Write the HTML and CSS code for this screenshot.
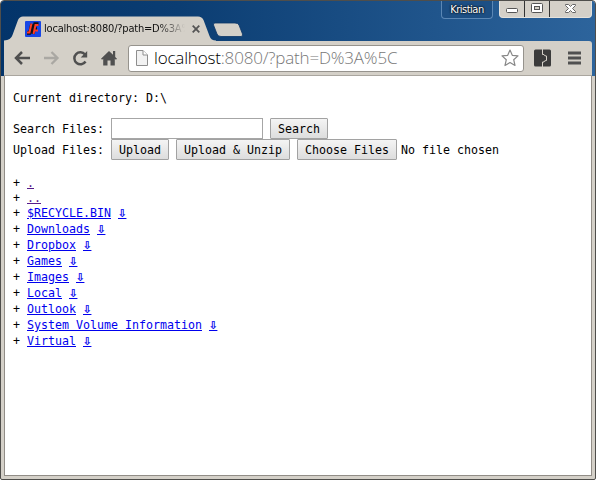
FILE: index.html
```
<!DOCTYPE html>
<html lang="en">
<head>
<meta charset="utf-8">
<title>localhost:8080/?path=D%3A%5C</title>
<link rel="stylesheet" href="styles.css">
</head>
<body>
<div class="window">
  <header class="chrome">
    <div class="titlebar">
      <div class="tab">
        <svg class="tab-shape" width="213" height="25" viewBox="0 0 213 25"><path d="M0 25V24.500Q7 24 8.500 19L14 4Q15.500 .5 19 .5H194Q198 .5 199.500 4L205.500 20Q207 24.500 212 24.500V25Z" fill="#d4d0c8"/></svg>
        <svg class="favicon" width="16" height="16" viewBox="0 0 16 16"><rect width="16" height="16" rx="1" fill="#1746e6"/><path d="M7 3L5.500 9L4.500 12H2M13.500 3H10L8 13M9 8H12" fill="none" stroke="#101018" stroke-width="3.500"/><path d="M6.500 2.500L5 9L4.500 11.500H2M13.500 4H10.500L8.500 13M9 9.500H13" fill="none" stroke="#ff3c24" stroke-width="2"/></svg>
        <span class="tab-title">localhost:8080/?path=D%3A%5C</span>
        <svg class="tab-close" width="8" height="8" viewBox="0 0 8 8"><path d="M.7 .7L7.300 7.300M7.300 .7L.7 7.300" stroke="#555" stroke-width="1.800"/></svg>
      </div>
      <svg class="new-tab" width="32" height="16" viewBox="0 0 32 16"><path d="M3 1H23Q26 1 27 3L30.500 12Q31 14.500 29 14.500H9Q6 14.500 5 12L1.500 3Q1 1 3 1Z" fill="#d4d0c8" stroke="#0a3566" stroke-width=".8"/></svg>
      <span class="user">Kristian</span>
      <div class="controls">
        <span class="control"><svg width="24" height="16" viewBox="0 0 24 16"><rect x="6.500" y="7.500" width="11" height="4" rx="1" fill="#fff" stroke="#555"/></svg></span>
        <span class="control"><svg width="24" height="16" viewBox="0 0 24 16"><rect x="6.500" y="2.500" width="11" height="9" rx="1" fill="#fff" stroke="#555"/><rect x="9.500" y="5.500" width="5" height="3" fill="#d4d0c8" stroke="#555"/></svg></span>
        <span class="control close"><svg width="41" height="16" viewBox="0 0 41 16"><path d="M15.500 3.500H18.500L20.500 5.500L22.500 3.500H25.500V4.500L22.500 7.500L25.500 10.500V11.500H22.500L20.500 9.500L18.500 11.500H15.500V10.500L18.500 7.500L15.500 4.500Z" fill="#fff" stroke="#666"/></svg></span>
      </div>
    </div>
    <div class="toolbar">
      <svg class="nav" width="18" height="16" viewBox="0 0 18 16"><path d="M16 8H2.500M8 2L2 8L8 14" fill="none" stroke="#505050" stroke-width="2.500"/></svg>
      <svg class="nav" width="18" height="16" viewBox="0 0 18 16"><path d="M1 8H14M8.500 2L14.500 8L8.500 14" fill="none" stroke="#aaa8a3" stroke-width="2.300"/></svg>
      <svg class="nav" width="18" height="16" viewBox="0 0 18 16"><path d="M13.500 11.500A6 6 0 1 1 13 4.500" fill="none" stroke="#505050" stroke-width="2.500"/><path d="M15.200 1V7.500H8.700Z" fill="#505050"/></svg>
      <svg class="nav" width="18" height="16" viewBox="0 0 18 16"><path d="M8 1L12 4.800V1H14.200V7L16 8.700L14.900 9.700L13.800 8.800V15.500H9.500V10.500H6.500V15.500H2.200V8.800L1.100 9.700L0 8.700Z" fill="#505050"/></svg>
      <div class="address">
        <svg class="page-icon" width="12" height="16" viewBox="0 0 12 16"><path d="M.5 .5H7L11.500 5V15.500H.5Z" fill="#f2f2f2" stroke="#8e8e8e"/><path d="M7 .5V5H11.500" fill="#fff" stroke="#8e8e8e"/></svg>
        <span class="url"><span class="host">localhost</span>:8080/?path=D%3A%5C</span>
        <svg class="star" width="18" height="18" viewBox="0 0 18 18"><path d="M9 1L11.300 6.300L17 6.900L12.700 10.700L14 16.500L9 13.500L4 16.500L5.300 10.700L1 6.900L6.700 6.300Z" fill="#fff" stroke="#888" stroke-width="1.200" stroke-linejoin="round"/></svg>
      </div>
      <svg class="extension" width="17" height="18" viewBox="0 0 17 18"><rect y=".5" width="17" height="17" rx="1.500" fill="#3b3b3b"/><path d="M8.500 0V5.500H10Q10 7 12.500 7V11.500Q10 11.500 10 13H8.500V18" fill="none" stroke="#d4d0c8" stroke-width="1"/></svg>
      <svg class="menu" width="13" height="14" viewBox="0 0 13 14"><path d="M0 2H13M0 7H13M0 12H13" stroke="#505050" stroke-width="3"/></svg>
    </div>
  </header>
  <main class="page">
    <p class="current">Current directory: D:\</p>
    <form class="search"><label>Search Files:</label><input class="query" type="text" aria-label="Search Files"><button class="button" type="button">Search</button></form>
    <form class="upload"><label>Upload Files:</label><button class="button" type="button">Upload</button><button class="button" type="button">Upload &amp; Unzip</button><button class="button" type="button">Choose Files</button><span class="chosen">No file chosen</span></form>
    <div class="listing">
      <div class="entry short">+ <a class="visited" href="#">.</a></div>
      <div class="entry short">+ <a class="visited" href="#">..</a></div>
      <div class="entry">+ <a href="#">$RECYCLE.BIN</a> <a class="down" href="#">⇩</a></div>
      <div class="entry">+ <a href="#">Downloads</a> <a class="down" href="#">⇩</a></div>
      <div class="entry">+ <a href="#">Dropbox</a> <a class="down" href="#">⇩</a></div>
      <div class="entry">+ <a href="#">Games</a> <a class="down" href="#">⇩</a></div>
      <div class="entry">+ <a href="#">Images</a> <a class="down" href="#">⇩</a></div>
      <div class="entry">+ <a href="#">Local</a> <a class="down" href="#">⇩</a></div>
      <div class="entry">+ <a href="#">Outlook</a> <a class="down" href="#">⇩</a></div>
      <div class="entry">+ <a href="#">System Volume Information</a> <a class="down" href="#">⇩</a></div>
      <div class="entry">+ <a href="#">Virtual</a> <a class="down" href="#">⇩</a></div>
    </div>
  </main>
</div>
</body>
</html>
```
FILE: styles.css
```
* { box-sizing: border-box; }
body { margin: 0; background: #fff; }
svg { display: block; flex: none; }
.window {
  width: 596px;
  height: 480px;
  display: flex;
  flex-direction: column;
  border: 1px solid #4f4e4b;
  border-radius: 4px 4px 2px 2px;
  overflow: hidden;
  background: #d4d0c8;
}
.chrome {
  height: 75px;
  flex: none;
  padding: 0 3px;
  background: linear-gradient(90deg, #03346a, #0b3d72 30%, #2d649c);
}
.titlebar { height: 40px; display: flex; align-items: flex-start; }
.tab {
  position: relative;
  width: 213px;
  height: 25px;
  margin-top: 15px;
  padding: 5px 0 0 21px;
  display: flex;
  flex: none;
}
.tab-shape { position: absolute; left: 0; top: 0; }
.favicon, .tab-title, .tab-close { position: relative; }
.tab-title {
  width: 141px;
  margin-left: 3px;
  overflow: hidden;
  white-space: nowrap;
  font: 11px/15px "DejaVu Sans Condensed", "DejaVu Sans", sans-serif;
  font-stretch: condensed;
  letter-spacing: -0.2px;
  color: #111;
  -webkit-mask-image: linear-gradient(90deg, #000 115px, transparent 141px);
  mask-image: linear-gradient(90deg, #000 115px, transparent 141px);
}
.tab-close { margin: 4px 0 0 7px; }
.new-tab { margin: 21px 0 0 -5px; }
.user {
  width: 52px;
  height: 18px;
  margin-left: auto;
  border: 1px solid #5b87b5;
  border-top: 0;
  border-radius: 0 0 4px 4px;
  background: #1d4f84;
  color: #fff;
  text-align: center;
  font: 11px/17px "DejaVu Sans Condensed", "DejaVu Sans", sans-serif;
  font-stretch: condensed;
  letter-spacing: -0.5px;
  text-shadow: 0 0 2px #000, 0 0 2px #000;
}
.controls {
  display: flex;
  height: 17px;
  margin: 0 0 0 6px;
  border: 1px solid #e5e2dc;
  border-top: 0;
  border-radius: 0 0 4px 4px;
  background: #d4d0c8;
  overflow: hidden;
}
.control { width: 25px; border-right: 1px solid #333; }
.control.close { width: 41px; border: 0; }
.toolbar {
  height: 35px;
  padding: 0 10px;
  display: flex;
  align-items: center;
  border-radius: 0 3px 0 0;
  border-bottom: 1px solid #aaa69f;
  background: #d4d0c8;
}
.nav { margin-right: 11px; }
.address {
  width: 396px;
  height: 27px;
  margin-left: -2px;
  padding: 0 4px 0 7px;
  display: flex;
  flex: none;
  align-items: center;
  border: 1px solid #96938d;
  border-radius: 3px;
  background: #fff;
}
.url {
  margin-left: 6px;
  white-space: nowrap;
  font: 300 17px/24px "Open Sans", sans-serif;
  letter-spacing: -0.18px;
  color: #777;
}
.host { color: #000; }
.star { margin-left: auto; }
.extension { margin-left: 10px; }
.menu { margin-left: 17px; }
.page {
  flex: 1;
  margin: 0 3px 3px;
  padding: 14px 8px 0;
  border: 1px solid #918d87;
  border-top: 0;
  background: #fff;
  color: #000;
  font: 11.63px/16px "DejaVu Sans Mono", monospace;
}
.current { height: 28px; margin: 0; }
.search, .upload { height: 21px; display: flex; align-items: center; white-space: nowrap; }
.search label, .upload label { width: 98px; flex: none; }
.query {
  width: 152px;
  height: 21px;
  margin: 0 7px 0 0;
  padding: 1px;
  border: 1px solid #a6a6a6;
}
.button {
  height: 21px;
  margin: 0 7px 0 0;
  padding: 0 7px;
  border: 1px solid #a2a2a2;
  border-radius: 1px;
  background: linear-gradient(#f4f4f4, #ddd);
  color: #000;
  font: inherit;
}
.chosen { margin-left: -3px; }
.listing { margin-top: 15px; }
.entry { height: 16px; white-space: pre; }
.entry.short { height: 15px; }
.entry a { color: #00e; text-decoration: underline; }
.entry a.visited { color: #551a8b; }
.entry a.down {
  font-size: 14px;
  line-height: 10px;
  -webkit-text-stroke: 0.3px #00e;
}
```
